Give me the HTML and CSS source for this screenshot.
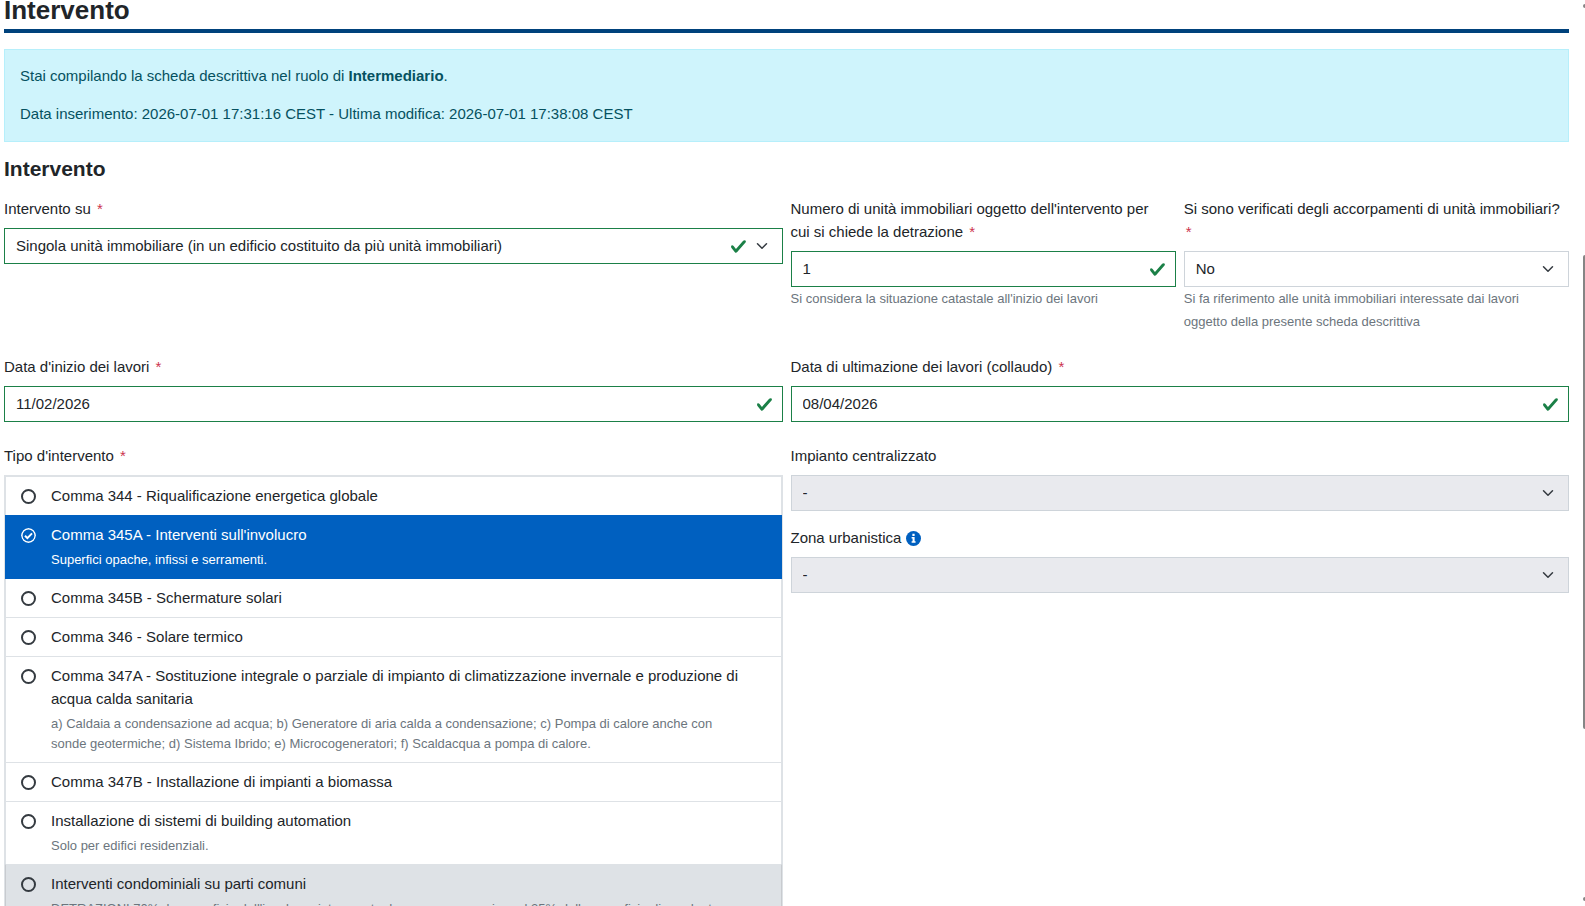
FILE: index.html
```
<!DOCTYPE html>
<html lang="it">
<head>
  <meta charset="UTF-8" />
  <meta name="viewport" content="width=device-width, initial-scale=1" />
  <title>Intervento</title>
  <link rel="stylesheet" href="styles.css">
</head>
<body>
  <main class="page">
    <h1 class="page-title">Intervento</h1>

    <div class="alert">
      <p>Stai compilando la scheda descrittiva nel ruolo di <strong>Intermediario</strong>.</p>
      <p>Data inserimento: 2026-07-01 17:31:16 CEST - Ultima modifica: 2026-07-01 17:38:08 CEST</p>
    </div>

    <h2 class="section-title">Intervento</h2>

    <form class="form-grid">
      <div class="field">
        <label for="intervento-su">Intervento su <span class="required">*</span></label>
        <select id="intervento-su" class="control select valid">
          <option>Singola unità immobiliare (in un edificio costituito da più unità immobiliari)</option>
        </select>
      </div>

      <div class="half-grid">
        <div class="field">
          <label for="numero-unita">Numero di unità immobiliari oggetto dell'intervento per cui&nbsp;si chiede la detrazione <span class="required">*</span></label>
          <input type="text" inputmode="numeric" id="numero-unita" class="control valid" value="1" />
          <div class="help">Si considera la situazione catastale all'inizio dei lavori</div>
        </div>
        <div class="field">
          <label for="accorpamenti">Si sono verificati degli accorpamenti di unità immobiliari? <span class="required">*</span></label>
          <select id="accorpamenti" class="control select">
            <option>No</option>
          </select>
          <div class="help">Si fa riferimento alle unità immobiliari interessate dai lavori oggetto&nbsp;della presente scheda descrittiva</div>
        </div>
      </div>

      <div class="field">
        <label for="data-inizio">Data d'inizio dei lavori <span class="required">*</span></label>
        <input type="text" id="data-inizio" class="control valid" value="11/02/2026" />
      </div>

      <div class="field">
        <label for="data-fine">Data di ultimazione dei lavori (collaudo) <span class="required">*</span></label>
        <input type="text" id="data-fine" class="control valid" value="08/04/2026" />
      </div>

      <!-- Tipo d'intervento -->
      <div class="field" role="radiogroup" aria-labelledby="tipo-label">
        <div class="label" id="tipo-label">Tipo d'intervento <span class="required">*</span></div>
        <div class="option-list">
          <label class="option">
            <input type="radio" name="tipo" />
            <span class="option-text">Comma 344 - Riqualificazione energetica globale</span>
          </label>
          <label class="option active">
            <input type="radio" name="tipo" checked />
            <span class="option-text">Comma 345A - Interventi sull'involucro
              <small>Superfici opache, infissi e serramenti.</small>
            </span>
          </label>
          <label class="option">
            <input type="radio" name="tipo" />
            <span class="option-text">Comma 345B - Schermature solari</span>
          </label>
          <label class="option">
            <input type="radio" name="tipo" />
            <span class="option-text">Comma 346 - Solare termico</span>
          </label>
          <label class="option">
            <input type="radio" name="tipo" />
            <span class="option-text">Comma 347A - Sostituzione integrale o parziale di impianto di climatizzazione invernale e produzione di acqua calda sanitaria
              <small>a) Caldaia a condensazione ad acqua; b) Generatore di aria calda a condensazione; c) Pompa di calore anche con sonde&nbsp;geotermiche; d) Sistema Ibrido; e) Microcogeneratori; f) Scaldacqua a pompa di calore.</small>
            </span>
          </label>
          <label class="option">
            <input type="radio" name="tipo" />
            <span class="option-text">Comma 347B - Installazione di impianti a biomassa</span>
          </label>
          <label class="option">
            <input type="radio" name="tipo" />
            <span class="option-text">Installazione di sistemi di building automation
              <small>Solo per edifici residenziali.</small>
            </span>
          </label>
          <label class="option secondary">
            <input type="radio" name="tipo" />
            <span class="option-text">Interventi condominiali su parti comuni
              <small>DETRAZIONI 70%: la superficie dell'involucro interessata deve essere superiore al 25% della superficie disperdente</small>
            </span>
          </label>
        </div>
      </div>

      <div class="stack">
        <div class="field">
          <label for="impianto">Impianto centralizzato</label>
          <select id="impianto" class="control select" disabled>
            <option>-</option>
          </select>
        </div>
        <div class="field">
          <label for="zona">Zona urbanistica
            <svg class="info-icon" viewBox="0 0 16 16" aria-hidden="true">
              <circle cx="8" cy="8" r="8" fill="#0060c0" />
              <path d="M6.8 3h2.4v2.3H6.8zM6 6.5h3.2v4.4h1V12.5H6v-1.6h1V8.1H6z" fill="#fff" />
            </svg>
          </label>
          <select id="zona" class="control select" disabled>
            <option>-</option>
          </select>
        </div>
      </div>
    </form>
  </main>

  <div class="scroll-track" aria-hidden="true">
    <span class="scroll-arrow"></span>
    <span class="scroll-thumb"></span>
    <span class="scroll-arrow"></span>
  </div>
</body>
</html>
```
FILE: styles.css
```
* {
  box-sizing: border-box;
}

body {
  margin: 0;
  background-color: #fff;
  font-family: Arial, "Liberation Sans", sans-serif;
  font-size: 15px;
  line-height: 23px;
  color: #212529;
}

.page {
  height: 100vh;
  padding: 0 16px 0 4px;
  overflow-y: auto;
  scrollbar-width: none;
}

.page-title {
  margin: 0 0 16px;
  padding-bottom: 9px;
  border-bottom: 4px solid #00427c;
  font-size: 26px;
  line-height: 20px;
}

.alert {
  margin-bottom: 14px;
  padding: 14px 15px 16px;
  background-color: #cff4fc;
  border: 1px solid #b6effb;
  color: #055160;
}

.alert p {
  margin: 0 0 15px;
}

.alert p:last-child {
  margin-bottom: 0;
}

.section-title {
  margin: 0 0 16px;
  font-size: 21px;
  line-height: 25px;
}

/* Form layout */
.form-grid {
  display: grid;
  grid-template-columns: 1fr 1fr;
  gap: 22px 8px;
  align-items: start;
}

.half-grid {
  display: grid;
  grid-template-columns: 1fr 1fr;
  gap: 8px;
}

.stack {
  display: flex;
  flex-direction: column;
  gap: 15px;
}

.field {
  min-width: 0;
}

.field > label,
.label {
  display: block;
  margin-bottom: 8px;
}

.required {
  margin-left: 2px;
  color: #cc334d;
}

.help {
  font-size: 13px;
  color: #6c757d;
}

.info-icon {
  width: 15px;
  height: 15px;
  vertical-align: -3px;
}

/* Controls */
.control {
  display: block;
  width: 100%;
  height: 36px;
  padding: 0 11px 2px;
  appearance: none;
  background-color: #fff;
  background-repeat: no-repeat;
  border: 1px solid #ced4da;
  border-radius: 0;
  font: inherit;
  color: #212529;
}

.control.valid {
  border-color: #1b8047;
  background-image: url("data:image/svg+xml,%3csvg xmlns='http://www.w3.org/2000/svg' viewBox='0 0 8 8'%3e%3cpath fill='%231b8047' d='M2.3 6.73L.6 4.53c-.4-1.04.46-1.4 1.1-.8l1.1 1.4 3.4-3.8c.6-.63 1.6-.27 1.2.7l-4 4.6c-.43.5-.8.4-1.1.1z'/%3e%3c/svg%3e");
  background-position: right 9px center;
  background-size: 17px 17px;
}

.select {
  background-image: url("data:image/svg+xml,%3csvg xmlns='http://www.w3.org/2000/svg' viewBox='0 0 16 16'%3e%3cpath fill='none' stroke='%23343a40' stroke-linecap='round' stroke-linejoin='round' stroke-width='2' d='M2 5l6 6 6-6'/%3e%3c/svg%3e");
  background-position: right 14px center;
  background-size: 12px 12px;
}

.select.valid {
  background-image: url("data:image/svg+xml,%3csvg xmlns='http://www.w3.org/2000/svg' viewBox='0 0 16 16'%3e%3cpath fill='none' stroke='%23343a40' stroke-linecap='round' stroke-linejoin='round' stroke-width='2' d='M2 5l6 6 6-6'/%3e%3c/svg%3e"), url("data:image/svg+xml,%3csvg xmlns='http://www.w3.org/2000/svg' viewBox='0 0 8 8'%3e%3cpath fill='%231b8047' d='M2.3 6.73L.6 4.53c-.4-1.04.46-1.4 1.1-.8l1.1 1.4 3.4-3.8c.6-.63 1.6-.27 1.2.7l-4 4.6c-.43.5-.8.4-1.1.1z'/%3e%3c/svg%3e");
  background-position: right 14px center, right 35px center;
  background-size: 12px 12px, 17px 17px;
}

.control:disabled {
  background-color: #e9eaee;
  opacity: 1;
}

/* Option list */
.option-list {
  border: 1px solid #dee2e6;
}

.option {
  display: flex;
  gap: 15px;
  padding: 7px 15px 8px;
  border: 1px solid #dee2e6;
  border-top: 0;
  cursor: pointer;
}

.option:first-child {
  border-top: 1px solid #dee2e6;
}

.option input {
  flex: none;
  width: 15px;
  height: 15px;
  margin: 5px 0 0;
  appearance: none;
  border: 2px solid #343a40;
  border-radius: 50%;
}

.option input:checked {
  border: 0;
  background: url("data:image/svg+xml,%3csvg xmlns='http://www.w3.org/2000/svg' viewBox='0 0 15 15' fill='none' stroke='white'%3e%3ccircle cx='7.5' cy='7.5' r='6.7' stroke-width='1.5'/%3e%3cpath stroke-width='2' d='M4 7.7l2.4 2.4L11 5.4'/%3e%3c/svg%3e") no-repeat center;
}

.option small {
  display: block;
  margin-top: 4px;
  font-size: 13px;
  line-height: 20px;
  color: #6c757d;
}

.option.active {
  margin-top: -1px;
  border: 1px solid #0060c0;
  background-color: #0060c0;
  color: #fff;
}

.option.active small {
  color: #fff;
}

.option.secondary {
  margin-top: -1px;
  border: 1px solid #c8cbcf;
  border-top-color: #dee2e6;
  background-color: #dee2e6;
}

/* Scrollbar at the window edge */
.scroll-track {
  position: fixed;
  top: 0;
  right: 0;
  bottom: 0;
  width: 2px;
  padding: 4px 0 5px;
  display: grid;
  grid-template-rows: 4px 247fr 474fr 168fr 4px;
}

.scroll-thumb {
  grid-row: 3;
  background-color: #858585;
  border-radius: 2px 0 0 2px;
}

.scroll-arrow {
  background-color: #858585;
  border-radius: 2px 0 0 2px;
}

.scroll-arrow:last-child {
  grid-row: 5;
}
```
